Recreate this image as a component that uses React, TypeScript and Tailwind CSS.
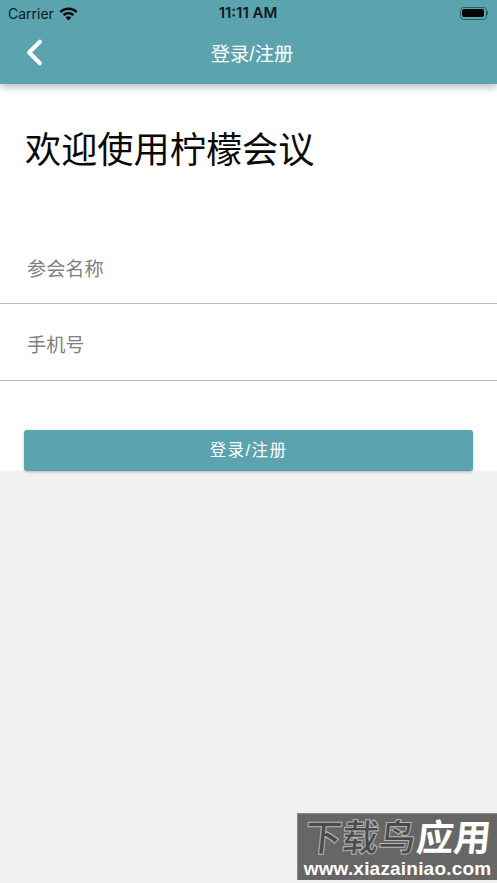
import { ChevronLeft } from "lucide-react";

const cjk = { fontFamily: '"Liberation Sans", "Noto Sans CJK SC", sans-serif' };

function Wifi() {
  return (
    <svg width="19" height="14" viewBox="0 0 19 14" fill="#0a0a0a">
      <path d="M9.5 0.5C6 0.5 2.9 1.9 0.6 4.1L2.2 5.9C4.1 4.1 6.7 3 9.5 3s5.4 1.1 7.3 2.9l1.6-1.8C16.1 1.9 13 0.5 9.5 0.5z" />
      <path d="M9.5 5C7.2 5 5.2 5.9 3.7 7.3l1.6 1.8C6.4 8.1 7.9 7.5 9.5 7.5s3.1 0.6 4.2 1.6l1.6-1.8C13.8 5.9 11.8 5 9.5 5z" />
      <path d="M9.5 9.3c-1.1 0-2.1 0.4-2.9 1.1L9.5 13.6l2.9-3.2c-0.8-0.7-1.8-1.1-2.9-1.1z" />
    </svg>
  );
}

function Battery() {
  return (
    <div className="flex items-center">
      <div className="w-[27px] h-[13px] rounded-[3.5px] border border-[#2f5a63] p-[1.5px]">
        <div className="w-full h-full rounded-[2px] bg-[#050505]" />
      </div>
      <div className="w-[1.5px] h-[4px] bg-[#2f5a63] rounded-r-sm" />
    </div>
  );
}

export default function App() {
  return (
    <div className="relative w-[497px] h-[883px] overflow-hidden bg-[#f1f1f1] flex flex-col" style={cjk}>
      <div className="relative z-10 h-[84px] bg-[#5ba3ae] shadow-[0_3px_8px_rgba(0,0,0,0.28)] flex flex-col shrink-0">
        <div className="h-[26px] grid grid-cols-3 items-center pl-[8px] pr-[9px] text-[#0d1a1c]">
          <div className="flex items-center gap-[5px] text-[14px] [font-family:Inter,sans-serif] pt-[1px]">
            <span>Carrier</span>
            <Wifi />
          </div>
          <div className="text-center text-[15px] font-semibold pt-[1px] [font-family:Inter,sans-serif]">11:11 AM</div>
          <div className="flex justify-end"><Battery /></div>
        </div>
        <div className="relative flex-1 flex items-center justify-center text-white text-[19.3px]">
          <ChevronLeft className="absolute left-[13px] top-[5px]" size={43} strokeWidth={2.3} />
          <span className="pl-[7px] pt-[1px]">登录/注册</span>
        </div>
      </div>

      <div className="h-[387px] bg-white shrink-0 flex flex-col">
        <h1 className="pl-[25px] mt-[46px] text-[36.2px] leading-[42px] text-[#0a0a0a] font-normal">欢迎使用柠檬会议</h1>
        <div className="mt-[56px] h-[77px] border-b border-[#bcbcbc] pl-[27px] pt-[10px] flex items-center text-[19.2px] text-[#808080]">
          参会名称
        </div>
        <div className="h-[78px] border-b border-[#bcbcbc] pl-[27px] pt-[9px] flex items-center text-[19.2px] text-[#808080]">
          手机号
        </div>
        <button className="mt-[49px] mx-[24px] h-[41px] rounded-[3px] bg-[#5ba3ae] shadow-[0_1px_3px_rgba(0,0,0,0.25)] text-white text-[16.5px] tracking-[1.4px] flex items-center justify-center">
          登录/注册
        </button>
      </div>

      <div className="absolute left-[297px] top-[813px] w-[200px] h-[67px] bg-[#666666] border-t border-l border-[#8a8a8a] flex flex-col items-center overflow-hidden">
        <div className="h-[45px] flex items-center gap-[1px] pt-[4px] font-bold -skew-x-6 text-[37px] leading-none whitespace-nowrap">
          <span className="text-[#4a4a4a] [-webkit-text-stroke:1px_#b5b5b5]">下载鸟</span>
          <span className="text-white">应用</span>
        </div>
        <div className="text-white font-bold text-[19px] leading-[19px] tracking-[0.2px] whitespace-nowrap [font-family:'Liberation_Sans',sans-serif]">www.xiazainiao.com</div>
      </div>
    </div>
  );
}
